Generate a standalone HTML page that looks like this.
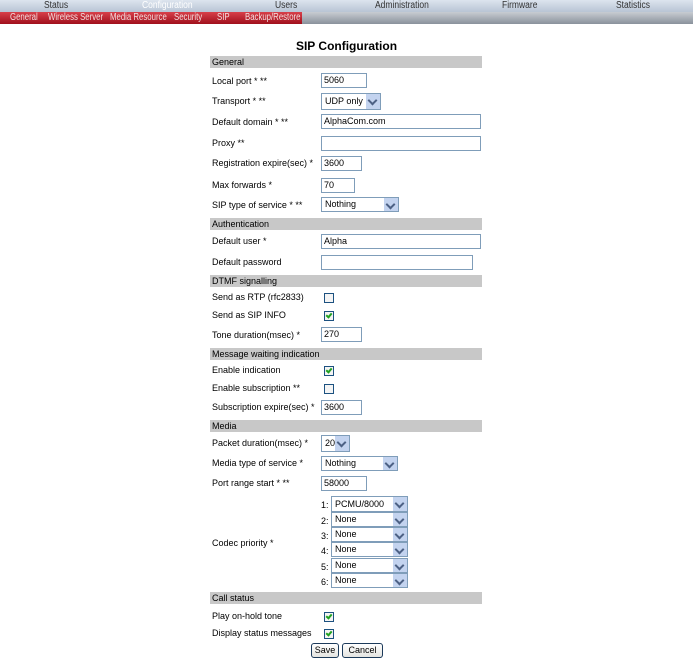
<!DOCTYPE html>
<html><head><style>
body{margin:0;width:693px;height:666px;position:relative;background:#fff;font-family:"Liberation Sans",sans-serif;font-size:9px;color:#000;overflow:hidden}
div,span{position:absolute}
.top{left:0;top:0;width:693px;height:12px;background:linear-gradient(#dce4ee,#b8c4d4)}
.top span{top:0;line-height:12px;font-size:10px;color:#333;transform:scaleX(0.85);transform-origin:left;white-space:nowrap}
.sub{left:0;top:12px;width:693px;height:12px;background:linear-gradient(#c8ccd2,#8a929c)}
.red{left:0;top:12px;width:302px;height:12px;background:linear-gradient(#d8404a,#a0101c)}
.red span{top:0;line-height:12px;font-size:10px;color:#f4e0e0;transform:scaleX(0.78);transform-origin:left;white-space:nowrap}
.h{left:210px;width:272px;height:12px;background:#c8c8c8;line-height:12px}
.h span{left:2px;top:0}
.l{left:212px;line-height:12px}
.in{height:13px;border:1px solid #7f9db9;line-height:13px;background:#fff}
.in span{left:2px;top:0}
.sel{height:15px;border:1px solid #7f9db9;background:#fff;line-height:15px;font-size:9px}
.sel span{left:3px;top:0}
.sel i{position:absolute;right:0;top:0;width:14px;height:15px;background:#c3d3ef}
.sel i:after{content:"";position:absolute;left:3px;top:3px;width:5px;height:5px;border-right:2px solid #4d6185;border-bottom:2px solid #4d6185;transform:rotate(45deg)}
.cb{width:8px;height:8px;border:1px solid #1c5180;background:#f4f4f4}
.cb.k:after{content:"";position:absolute;left:2px;top:0px;width:2px;height:4px;border-right:2px solid #21a121;border-bottom:2px solid #21a121;transform:rotate(40deg)}
.n{left:321px;line-height:12px;font-size:9px}
.btn{height:13px;border:1px solid #1c3a5a;border-radius:3px;background:linear-gradient(#fff,#e4e4e0);line-height:13px;text-align:center;font-size:9px}
</style></head><body>
<div class="top">
<span style="left:44px">Status</span><span style="left:142px;color:#fff">Configuration</span><span style="left:275px">Users</span><span style="left:375px">Administration</span><span style="left:502px">Firmware</span><span style="left:616px">Statistics</span>
</div>
<div class="sub"></div>
<div class="red"><span style="left:10px">General</span><span style="left:48px">Wireless Server</span><span style="left:110px">Media Resource</span><span style="left:174px">Security</span><span style="left:217px">SIP</span><span style="left:245px">Backup/Restore</span></div>
<div style="left:0;width:693px;top:39px;text-align:center;font-size:12px;font-weight:bold;line-height:14px">SIP Configuration</div>

<div class="h" style="top:56px"><span>General</span></div>
<div class="l" style="top:75px">Local port * **</div><div class="in" style="left:321px;top:73px;width:44px"><span>5060</span></div>
<div class="l" style="top:95px">Transport * **</div><div class="sel" style="left:321px;top:93px;width:58px"><span>UDP only</span><i></i></div>
<div class="l" style="top:116px">Default domain * **</div><div class="in" style="left:321px;top:114px;width:158px"><span>AlphaCom.com</span></div>
<div class="l" style="top:137px">Proxy **</div><div class="in" style="left:321px;top:136px;width:158px"></div>
<div class="l" style="top:157px">Registration expire(sec) *</div><div class="in" style="left:321px;top:156px;width:39px"><span>3600</span></div>
<div class="l" style="top:179px">Max forwards *</div><div class="in" style="left:321px;top:178px;width:32px"><span>70</span></div>
<div class="l" style="top:199px">SIP type of service * **</div><div class="sel" style="left:321px;top:197px;width:76px;height:13px;line-height:13px"><span>Nothing</span><i style="height:13px"></i></div>

<div class="h" style="top:218px"><span>Authentication</span></div>
<div class="l" style="top:235px">Default user *</div><div class="in" style="left:321px;top:234px;width:158px"><span>Alpha</span></div>
<div class="l" style="top:256px">Default password</div><div class="in" style="left:321px;top:255px;width:150px"></div>

<div class="h" style="top:275px"><span>DTMF signalling</span></div>
<div class="l" style="top:291px">Send as RTP (rfc2833)</div><div class="cb" style="left:324px;top:293px"></div>
<div class="l" style="top:309px">Send as SIP INFO</div><div class="cb k" style="left:324px;top:311px"></div>
<div class="l" style="top:329px">Tone duration(msec) *</div><div class="in" style="left:321px;top:327px;width:39px"><span>270</span></div>

<div class="h" style="top:348px"><span>Message waiting indication</span></div>
<div class="l" style="top:364px">Enable indication</div><div class="cb k" style="left:324px;top:366px"></div>
<div class="l" style="top:382px">Enable subscription **</div><div class="cb" style="left:324px;top:384px"></div>
<div class="l" style="top:401px">Subscription expire(sec) *</div><div class="in" style="left:321px;top:400px;width:39px"><span>3600</span></div>

<div class="h" style="top:420px"><span>Media</span></div>
<div class="l" style="top:437px">Packet duration(msec) *</div><div class="sel" style="left:321px;top:435px;width:27px"><span>20</span><i></i></div>
<div class="l" style="top:457px">Media type of service *</div><div class="sel" style="left:321px;top:456px;width:75px;height:13px;line-height:13px"><span>Nothing</span><i style="height:13px"></i></div>
<div class="l" style="top:477px">Port range start * **</div><div class="in" style="left:321px;top:476px;width:44px"><span>58000</span></div>
<div class="l" style="top:537px">Codec priority *</div>
<div class="n" style="top:499px">1:</div><div class="sel" style="left:331px;top:496px;width:75px;height:14px;line-height:14px"><span>PCMU/8000</span><i style="height:14px"></i></div>
<div class="n" style="top:515px">2:</div><div class="sel" style="left:331px;top:512px;width:75px;height:13px;line-height:13px"><span>None</span><i style="height:13px"></i></div>
<div class="n" style="top:530px">3:</div><div class="sel" style="left:331px;top:527px;width:75px;height:13px;line-height:13px"><span>None</span><i style="height:13px"></i></div>
<div class="n" style="top:545px">4:</div><div class="sel" style="left:331px;top:542px;width:75px;height:13px;line-height:13px"><span>None</span><i style="height:13px"></i></div>
<div class="n" style="top:561px">5:</div><div class="sel" style="left:331px;top:558px;width:75px;height:13px;line-height:13px"><span>None</span><i style="height:13px"></i></div>
<div class="n" style="top:576px">6:</div><div class="sel" style="left:331px;top:573px;width:75px;height:13px;line-height:13px"><span>None</span><i style="height:13px"></i></div>

<div class="h" style="top:592px"><span>Call status</span></div>
<div class="l" style="top:610px">Play on-hold tone</div><div class="cb k" style="left:324px;top:612px"></div>
<div class="l" style="top:627px">Display status messages</div><div class="cb k" style="left:324px;top:629px"></div>
<div class="btn" style="left:311px;top:643px;width:26px">Save</div>
<div class="btn" style="left:342px;top:643px;width:39px">Cancel</div>
</body></html>
